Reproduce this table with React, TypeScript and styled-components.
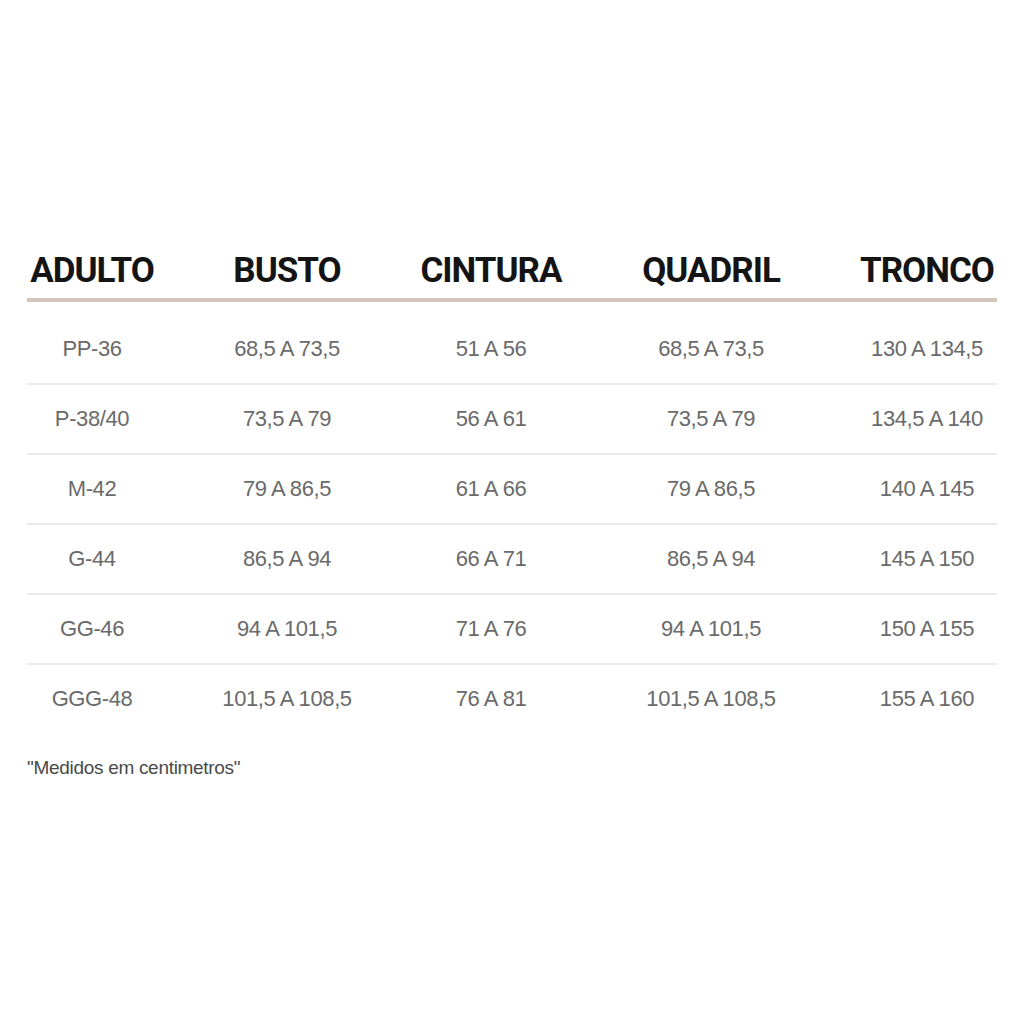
import styled, { createGlobalStyle } from "styled-components";

type Row = { size: string; busto: string; cintura: string; quadril: string; tronco: string };

const rows: Row[] = [
	{ size: "PP-36", busto: "68,5 A 73,5", cintura: "51 A 56", quadril: "68,5 A 73,5", tronco: "130 A 134,5" },
	{ size: "P-38/40", busto: "73,5 A 79", cintura: "56 A 61", quadril: "73,5 A 79", tronco: "134,5 A 140" },
	{ size: "M-42", busto: "79 A 86,5", cintura: "61 A 66", quadril: "79 A 86,5", tronco: "140 A 145" },
	{ size: "G-44", busto: "86,5 A 94", cintura: "66 A 71", quadril: "86,5 A 94", tronco: "145 A 150" },
	{ size: "GG-46", busto: "94 A 101,5", cintura: "71 A 76", quadril: "94 A 101,5", tronco: "150 A 155" },
	{ size: "GGG-48", busto: "101,5 A 108,5", cintura: "76 A 81", quadril: "101,5 A 108,5", tronco: "155 A 160" },
];

const headers = ["ADULTO", "BUSTO", "CINTURA", "QUADRIL", "TRONCO"];

function App() {
	return (
		<>
			<GlobalStyle />
			<StPage>
				<StTable>
					<StHeadRow>
						{headers.map((h) => (
							<StHeadCell key={h}>{h}</StHeadCell>
						))}
					</StHeadRow>
					<StBody>
						{rows.map((r, i) => (
							<StRow key={r.size} $last={i === rows.length - 1}>
								<StCell>{r.size}</StCell>
								<StCell>{r.busto}</StCell>
								<StCell>{r.cintura}</StCell>
								<StCell>{r.quadril}</StCell>
								<StCell>{r.tronco}</StCell>
							</StRow>
						))}
					</StBody>
				</StTable>
				<StNote>"Medidos em centimetros"</StNote>
			</StPage>
		</>
	);
}

export default App;

const GlobalStyle = createGlobalStyle`
	html, body {
		margin: 0;
		background: #fff;
	}
`;

const StPage = styled.div`
	width: 1024px;
	height: 1024px;
	padding: 251px 0 0 27px;
	box-sizing: border-box;
`;

const StTable = styled.div`
	width: 970px;
`;

const cols = "130px 260px 148px 292px 140px";

const StHeadRow = styled.div`
	display: grid;
	grid-template-columns: ${cols};
	padding-bottom: 7px;
	border-bottom: 4px solid #d5c4b8;
`;

const StHeadCell = styled.div`
	text-align: center;
	font-family: Roboto, "Liberation Sans", sans-serif;
	font-weight: 700;
	font-size: 35px;
	letter-spacing: -1px;
	line-height: 40px;
	color: #141414;
	white-space: nowrap;
`;

const StBody = styled.div`
	padding-top: 13px;
`;

const StRow = styled.div<{ $last?: boolean }>`
	display: grid;
	grid-template-columns: ${cols};
	align-items: center;
	height: 68px;
	border-bottom: 2px solid ${(p) => (p.$last ? "transparent" : "#ebebeb")};
`;

const StCell = styled.div`
	text-align: center;
	font-family: "Liberation Sans", Arial, sans-serif;
	font-size: 22px;
	letter-spacing: -0.4px;
	color: #6a6a6a;
	white-space: nowrap;
`;

const StNote = styled.div`
	margin-top: 22px;
	font-family: "Liberation Sans", Arial, sans-serif;
	font-size: 19px;
	letter-spacing: -0.3px;
	color: #4a4a4a;
`;
